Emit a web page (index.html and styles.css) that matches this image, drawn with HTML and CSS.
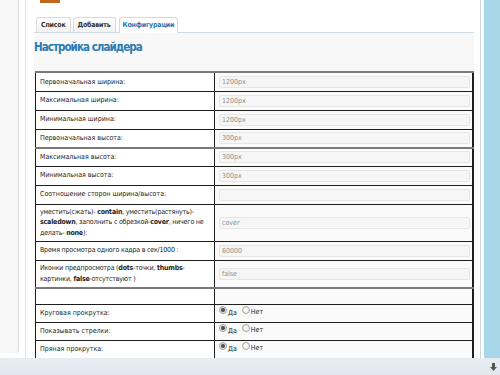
FILE: index.html
```html
<!DOCTYPE html>
<html lang="ru">
<head>
    <meta charset="UTF-8">
    <meta name="viewport" content="width=device-width, initial-scale=1.0">
    <title>Настройка слайдера</title>
    <link rel="stylesheet" href="styles.css">
</head>
<body>
    <div class="window">
        <div class="rail"></div>
        <div class="page">
            <div class="page-inner">
                <div class="logo"></div>

                <div class="tabs">
                    <span class="tab">Список</span>
                    <span class="tab">Добавить</span>
                    <span class="tab active-tab">Конфигурации</span>
                </div>

                <div class="panel">
                    <h2>Настройка слайдера</h2>

                    <table class="settings">
                        <colgroup>
                            <col class="col-label">
                            <col>
                        </colgroup>
                        <tbody>
                            <tr>
                                <td class="label">Первоначальная ширина:</td>
                                <td><input type="text" value="1200px" readonly></td>
                            </tr>
                            <tr>
                                <td class="label">Максимальная ширина:</td>
                                <td><input type="text" value="1200px" readonly></td>
                            </tr>
                            <tr>
                                <td class="label">Минимальная ширина:</td>
                                <td><input type="text" value="1200px" readonly></td>
                            </tr>
                            <tr>
                                <td class="label">Первоначальная высота:</td>
                                <td><input type="text" value="300px" readonly></td>
                            </tr>
                        </tbody>
                        <tbody>
                            <tr class="short">
                                <td class="label">Максимальная высота:</td>
                                <td><input type="text" value="300px" readonly></td>
                            </tr>
                            <tr>
                                <td class="label">Минимальная высота:</td>
                                <td><input type="text" value="300px" readonly></td>
                            </tr>
                            <tr>
                                <td class="label">Соотношение сторон ширина/высота:</td>
                                <td><input type="text" value="" readonly></td>
                            </tr>
                            <tr class="three-lines">
                                <td class="label long">уместить(сжать)- <b>contain</b>, уместить(растянуть)-<br><b>scaledown</b>, заполнить с обрезкой-<b>cover</b>, ничего не<br>делать- <b>none</b>):</td>
                                <td><input type="text" value="cover" readonly></td>
                            </tr>
                            <tr>
                                <td class="label long">Время просмотра одного кадра в сек/1000 :</td>
                                <td><input type="text" value="60000" readonly></td>
                            </tr>
                            <tr class="two-lines">
                                <td class="label long">Иконки предпросмотра (<b>dots</b>-точки, <b>thumbs</b>-<br>картинки, <b>false</b>-отсутствуют )</td>
                                <td><input type="text" value="false" readonly></td>
                            </tr>
                        </tbody>
                        <tbody>
                            <tr class="blank">
                                <td class="label"></td>
                                <td></td>
                            </tr>
                            <tr class="short">
                                <td class="label">Круговая прокрутка:</td>
                                <td class="choice">
                                    <label><input type="radio" name="loop" checked><span class="yes">Да</span></label>
                                    <label><input type="radio" name="loop">Нет</label>
                                </td>
                            </tr>
                            <tr class="short">
                                <td class="label">Показывать стрелки:</td>
                                <td class="choice">
                                    <label><input type="radio" name="arrows" checked><span class="yes">Да</span></label>
                                    <label><input type="radio" name="arrows">Нет</label>
                                </td>
                            </tr>
                            <tr class="short">
                                <td class="label">Пряная прокрутка:</td>
                                <td class="choice">
                                    <label><input type="radio" name="direct" checked><span class="yes">Да</span></label>
                                    <label><input type="radio" name="direct">Нет</label>
                                </td>
                            </tr>
                        </tbody>
                    </table>
                </div>
            </div>
        </div>
        <div class="edge"></div>
        <div class="sky"></div>
    </div>

    <div class="statusbar">
        <svg class="down" width="7" height="8" viewBox="0 0 7 8">
            <path d="M2 0h3v4h2L3.5 8 0 4h2z" fill="#555"/>
        </svg>
    </div>
</body>
</html>
```

FILE: styles.css
```css
body {
    margin: 0;
    background-color: #fff;
    font-family: "DejaVu Sans Condensed", "DejaVu Sans", sans-serif;
    font-size: 7px;
    color: #222;
}
.window {
    display: flex;
    height: 358px;
    overflow: hidden;
}
.rail {
    flex-shrink: 0;
    width: 18px;
    height: 353px;
    background-color: #f8f8f8;
    border-right: 1px solid #dcdcdc;
    border-bottom-right-radius: 4px;
}
.page {
    flex: 1;
    min-width: 0;
    padding-left: 6px;
    padding-right: 6px;
}
.page-inner {
    height: 100%;
    border-left: 1px solid #e2e2e2;
    padding-left: 8px;
}
.logo {
    width: 20px;
    height: 3px;
    margin-left: 6px;
    background-color: #c3671c;
}
.tabs {
    display: flex;
    gap: 2px;
    margin-top: 14px;
    padding-left: 2px;
    border-bottom: 1px solid #cfdce4;
    font-size: 7px;
    letter-spacing: -0.2px;
}
.tab {
    height: 14px;
    line-height: 15px;
    padding: 0 4px;
    font-weight: bold;
    color: #333;
    background: linear-gradient(#fff, #f2f2f2);
    border: 1px solid #dadada;
    border-bottom: none;
    border-radius: 3px 3px 0 0;
}
.active-tab {
    margin-left: 1px;
    padding: 0 3px;
    color: #2279b5;
    background: #fff;
    border-color: #cfdce4;
    margin-bottom: -1px;
    height: 15px;
}
.panel {
    background-color: #f8f8f8;
    padding-top: 7px;
    height: 100%;
}
h2 {
    margin: 0 0 17px 0;
    font-size: 11.5px;
    line-height: 14px;
    letter-spacing: -0.95px;
    color: #2a7ab3;
}
.settings {
    table-layout: fixed;
    width: 439px;
    margin-left: 1px;
    border-collapse: collapse;
    border-right: 2px solid #1e1e1e;
    background-color: #fafafa;
}
.col-label {
    width: 179px;
}
.settings tbody {
    border-top: 2px solid #7a7a7a;
}
.settings tr {
    height: 19px;
}
.settings tr.short {
    height: 18px;
}
.settings tr.three-lines {
    height: 37px;
}
.settings tr.two-lines {
    height: 28px;
}
.settings tr.blank {
    height: 16px;
}
.settings td {
    padding: 0 3px 0 4px;
    border: 1px solid #1e1e1e;
    vertical-align: middle;
    line-height: 10.5px;
}
.settings td.label {
    background-color: #fff;
    white-space: nowrap;
}
.settings td.long {
    letter-spacing: -0.2px;
}
.settings input[type="text"] {
    display: block;
    box-sizing: border-box;
    width: 251px;
    height: 12px;
    padding: 0 2px;
    font-family: inherit;
    font-size: 7px;
    color: #8d8d8d;
    background-color: #f6f6f6;
    border: 1px solid #e6e6e6;
    border-radius: 2px;
    outline: none;
}
.choice label {
    display: inline-flex;
    align-items: center;
    margin-right: 3px;
    font-size: 7px;
    color: #222;
}
.choice input[type="radio"] {
    appearance: none;
    width: 8px;
    height: 8px;
    margin: 0 1px 0 0;
    border: 1px solid #a7a7a7;
    border-radius: 50%;
    background: radial-gradient(#fff, #e4e4e4);
    position: relative;
    top: -2px;
}
.choice input[type="radio"]:checked {
    background: radial-gradient(circle, #555 0, #555 1.5px, #ddd 2.5px, #eee 4px);
}
.choice .yes {
    padding-top: 2px;
}
.edge {
    flex-shrink: 0;
    width: 3px;
    border-left: 1px solid #cbdae3;
}
.sky {
    flex-shrink: 0;
    width: 16px;
    background-color: #a8d7ea;
}
.statusbar {
    height: 17px;
    background: linear-gradient(#e7ecf1, #e2e8ee);
    display: flex;
    justify-content: flex-end;
    align-items: center;
    padding-right: 3px;
}
```
